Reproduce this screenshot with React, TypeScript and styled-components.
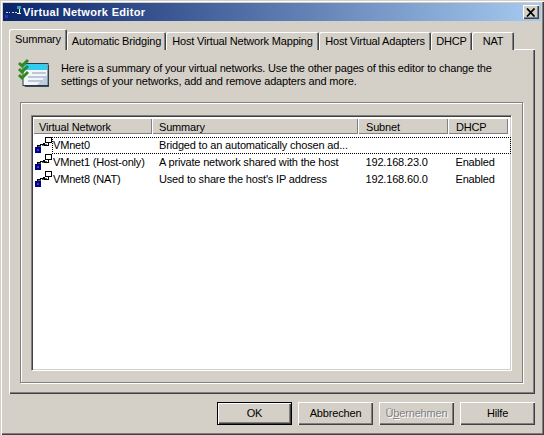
import React from "react";
import styled, { createGlobalStyle } from "styled-components";

const Global = createGlobalStyle`
  html, body { margin: 0; padding: 0; background: #d4d0c8; }
  * { box-sizing: border-box; }
`;

const Window = styled.div`
  width: 544px;
  height: 435px;
  background: #d4d0c8;
  padding: 3px 3px 2px;
  display: flex;
  flex-direction: column;
  font: 11px/13px "Liberation Sans", Arial, sans-serif;
  letter-spacing: -0.17px;
  color: #000;
  box-shadow: inset 1px 1px 0 #d4d0c8, inset 2px 2px 0 #fff, inset -1px -1px 0 #404040, inset -2px -2px 0 #808080;
`;

const TitleBar = styled.div`
  height: 18px;
  flex: none;
  display: flex;
  align-items: center;
  padding: 0 2px;
  background: linear-gradient(90deg, #0a246a, #a6caf0);
`;

const TitleText = styled.span`
  color: #fff;
  font-weight: 700;
  font-size: 11px;
  letter-spacing: 0.32px;
`;

const CloseButton = styled.div`
  margin-left: auto;
  width: 16px;
  height: 14px;
  background: #d4d0c8;
  display: flex;
  align-items: center;
  justify-content: center;
  box-shadow: inset 1px 1px 0 #fff, inset -1px -1px 0 #404040, inset -2px -2px 0 #808080;
`;

const Body = styled.div`
  flex: 1;
  display: flex;
  flex-direction: column;
  padding: 8px 6px 0;
`;

const TabRow = styled.div`
  display: flex;
  height: 21px;
  flex: none;
  align-items: flex-end;
  margin-bottom: -1px;
`;

const Tab = styled.div<{ $w: number; $active?: boolean }>`
  width: ${p => p.$w}px;
  height: ${p => (p.$active ? 21 : 18)}px;
  background: #d4d0c8;
  border-radius: 2px 2px 0 0;
  display: flex;
  align-items: center;
  justify-content: center;
  padding-bottom: ${p => (p.$active ? 1 : 0)}px;
  white-space: nowrap;
  box-shadow: inset 1px 1px 0 #fff, inset -1px 0 0 #404040, inset -2px 0 0 #808080;
  position: relative;
  z-index: ${p => (p.$active ? 2 : 0)};
`;

const Panel = styled.div`
  height: 345px;
  flex: none;
  padding: 7px 11px 11px 11px;
  display: flex;
  flex-direction: column;
  background: #d4d0c8;
  box-shadow: inset 1px 1px 0 #fff, inset -1px -1px 0 #404040, inset -2px -2px 0 #808080;
`;

const Intro = styled.div`
  display: flex;
  height: 46px;
  flex: none;
`;

const IntroIcon = styled.div`
  width: 43px;
  flex: none;
  margin: 2px 0 0 -2px;
`;

const IntroText = styled.p`
  margin: 6px 0 0;
  width: 450px;
`;

const Etched = styled.div`
  flex: 1;
  margin: 0 1px 0 0;
  padding: 12px 10px 11px 10px;
  display: flex;
  border: 1px solid #808080;
  box-shadow: 1px 1px 0 #fff, inset 1px 1px 0 #fff;
`;

const ListBox = styled.div`
  flex: 1;
  background: #fff;
  padding: 2px 1px 0 1px;
  border: 1px solid #808080;
  border-right-color: #fff;
  border-bottom-color: #fff;
  box-shadow: inset 1px 1px 0 #404040, inset -1px -1px 0 #d4d0c8;
  display: flex;
  flex-direction: column;
`;

const Header = styled.div`
  display: grid;
  grid-template-columns: 119px 206px 90px 60px;
  height: 16px;
  flex: none;
  margin-right: 1px;
`;

const HeaderCell = styled.div`
  background: #d4d0c8;
  padding: 3px 0 0 7px;
  box-shadow: inset 1px 1px 0 #fff, inset -1px -1px 0 #808080;
  &:first-child { padding-left: 6px; }
  &:nth-child(n + 3) { padding-left: 8px; }
`;

const Rows = styled.div`
  margin-top: 3px;
  display: flex;
  flex-direction: column;
`;

const Row = styled.div`
  display: grid;
  grid-template-columns: 119px 206px 90px 60px;
  height: 17px;
  align-items: center;
  position: relative;
`;

const FirstCell = styled.div`
  display: flex;
  align-items: center;
  height: 17px;
`;

const NetIconWrap = styled.div`
  width: 18px;
  flex: none;
  height: 17px;
  margin-left: 2px;
`;

const Cell = styled.div`
  padding-left: 7px;
  white-space: nowrap;
  overflow: hidden;
  &:nth-child(n + 3) { padding-left: 7.5px; }
`;

const Focus = styled.div`
  position: absolute;
  left: 19px;
  right: -1px;
  top: 0;
  bottom: 0;
  border: 1px dotted #000;
  pointer-events: none;
`;

const Footer = styled.div`
  display: flex;
  justify-content: flex-end;
  gap: 6px;
  padding: 8px 0 0;
`;

const Button = styled.div<{ $default?: boolean; $disabled?: boolean }>`
  width: 75px;
  height: 23px;
  display: flex;
  align-items: center;
  justify-content: center;
  background: #d4d0c8;
  color: ${p => (p.$disabled ? "#808080" : "#000")};
  text-shadow: ${p => (p.$disabled ? "1px 1px 0 #fff" : "none")};
  box-shadow: ${p =>
    p.$default
      ? "inset 0 0 0 1px #000, inset 2px 2px 0 #fff, inset -2px -2px 0 #404040, inset -3px -3px 0 #808080"
      : "inset 1px 1px 0 #fff, inset -1px -1px 0 #404040, inset -2px -2px 0 #808080"};
`;

const NetIcon = () => (
  <svg width="18" height="17" viewBox="0 0 18 17" shapeRendering="crispEdges">
    <rect x="0" y="10" width="6" height="6" fill="#000080" />
    <rect x="2" y="12" width="2" height="2" fill="#3a3ae8" />
    <rect x="10.5" y="0.5" width="6" height="5" fill="#fff" stroke="#000" strokeWidth="1" />
    <path d="M2.5 10V8h3V7h3V6h1v2h4v-2" fill="none" stroke="#000" strokeWidth="1" />
    <path d="M3 9h3M7 8h2M10 7h2" stroke="#4a6a60" strokeWidth="1" />
  </svg>
);

const InfoIcon = () => (
  <svg width="32" height="31" viewBox="0 0 32 31">
    <path d="M6 7H31V29H8a2 2 0 0 1-2-2Z" fill="#3a4a55" />
    <rect x="5" y="5.5" width="25" height="22" fill="#f2f6fc" stroke="#2b3a44" strokeWidth="1" />
    <rect x="6" y="6" width="23" height="6" fill="#33ccee" />
    <path d="M14 15h14M10 19h18M10 23h14" stroke="#8a97a8" strokeWidth="1.2" />
    <path d="M19 27l10-10v10Z" fill="#a9bedd" opacity=".7" />
    <path d="M1 5l3 3 6-6M1 11l3 3 6-6M1 17l3 3 6-6" fill="none" stroke="#2f8a22" strokeWidth="3" />
  </svg>
);

const TitleIcon = () => (
  <svg width="18" height="15" viewBox="0 0 18 15" shapeRendering="crispEdges">
    <rect x="0" y="10" width="3" height="3" fill="#3030c0" />
    <path d="M1 7h4M7 7h5" stroke="#c8d4e8" strokeWidth="1" strokeDasharray="2 1" />
    <rect x="12" y="1" width="4" height="3" fill="#40a0a0" />
    <path d="M14 4v5M12 8h4" stroke="#fff" strokeWidth="1" />
  </svg>
);

const CloseGlyph = () => (
  <svg width="10" height="9" viewBox="0 0 10 9">
    <path d="M1 0.5L8.5 8.5M8.5 0.5L1 8.5" stroke="#000" strokeWidth="1.8" fill="none" />
  </svg>
);

const tabs: [string, number][] = [
  ["Summary", 58],
  ["Automatic Bridging", 99],
  ["Host Virtual Network Mapping", 153],
  ["Host Virtual Adapters", 112],
  ["DHCP", 41],
  ["NAT", 42],
];

const rows = [
  ["VMnet0", "Bridged to an automatically chosen ad...", "", ""],
  ["VMnet1 (Host-only)", "A private network shared with the host", "192.168.23.0", "Enabled"],
  ["VMnet8 (NAT)", "Used to share the host's IP address", "192.168.60.0", "Enabled"],
];

export default function App() {
  return (
    <Window>
      <Global />
      <TitleBar>
        <TitleIcon />
        <TitleText>Virtual Network Editor</TitleText>
        <CloseButton>
          <CloseGlyph />
        </CloseButton>
      </TitleBar>
      <Body>
        <TabRow>
          {tabs.map(([t, w], i) => (
            <Tab key={t} $w={w} $active={i === 0}>
              {t}
            </Tab>
          ))}
        </TabRow>
        <Panel>
          <Intro>
            <IntroIcon>
              <InfoIcon />
            </IntroIcon>
            <IntroText>
              Here is a summary of your virtual networks. Use the other pages of this editor to change the settings of
              your networks, add and remove adapters and more.
            </IntroText>
          </Intro>
          <Etched>
            <ListBox>
              <Header>
                <HeaderCell>Virtual Network</HeaderCell>
                <HeaderCell>Summary</HeaderCell>
                <HeaderCell>Subnet</HeaderCell>
                <HeaderCell>DHCP</HeaderCell>
              </Header>
              <Rows>
                {rows.map((r, i) => (
                  <Row key={r[0]}>
                    <FirstCell>
                      <NetIconWrap>
                        <NetIcon />
                      </NetIconWrap>
                      {r[0]}
                    </FirstCell>
                    <Cell>{r[1]}</Cell>
                    <Cell>{r[2]}</Cell>
                    <Cell>{r[3]}</Cell>
                    {i === 0 && <Focus />}
                  </Row>
                ))}
              </Rows>
            </ListBox>
          </Etched>
        </Panel>
        <Footer>
          <Button $default>OK</Button>
          <Button>Abbrechen</Button>
          <Button $disabled>
            <span>
              Ü<u>b</u>ernehmen
            </span>
          </Button>
          <Button>Hilfe</Button>
        </Footer>
      </Body>
    </Window>
  );
}
